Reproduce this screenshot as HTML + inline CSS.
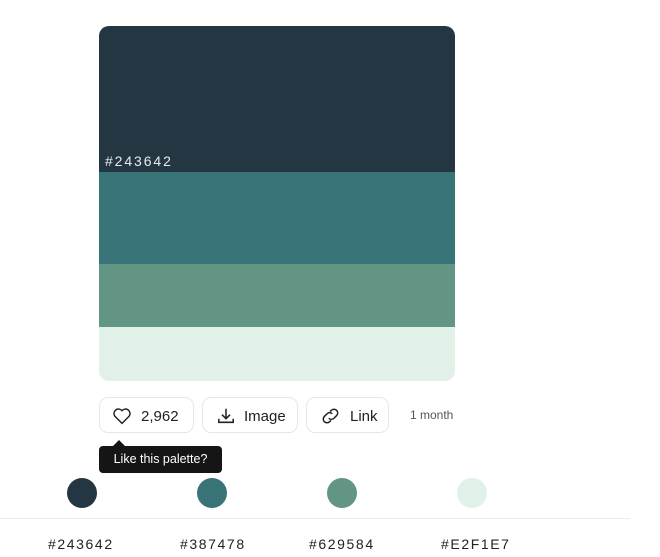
<!DOCTYPE html>
<html><head><style>
body{margin:0;width:660px;height:557px;background:#fff;font-family:"Liberation Sans",sans-serif;position:relative;overflow:hidden}
.pal{position:absolute;left:99px;top:26px;width:356px;height:355px;border-radius:10px;overflow:hidden}
.pal div{position:relative}
.hex{position:absolute;left:6px;bottom:3px;color:#e6ebee;font-size:14px;letter-spacing:1.9px}
.btn{position:absolute;top:397px;height:36px;border:1px solid #e6e6e6;border-radius:9px;display:flex;align-items:center;font-size:15px;color:#222;box-sizing:border-box;padding-left:12px;padding-top:2px}
.btn svg{margin-right:9px}
.tip{position:absolute;left:99px;top:446px;width:123px;height:27px;background:#151515;color:#fff;border-radius:4px;font-size:12.5px;line-height:27px;text-align:center}
.tip:before{content:"";position:absolute;left:14px;top:-6px;border:6px solid transparent;border-top:0;border-bottom-color:#151515}
.c{position:absolute;top:478px;width:30px;height:30px;border-radius:50%}
.l{position:absolute;top:536px;font-size:14px;letter-spacing:1.6px;color:#222}
</style></head><body>
<div class="pal">
<div style="height:146px;background:#243642"><span class="hex">#243642</span></div>
<div style="height:92px;background:#387478"></div>
<div style="height:63px;background:#629584"></div>
<div style="height:54px;background:#E2F1E7"></div>
</div>
<div class="btn" style="left:99px;width:95px"><svg width="20" height="18" viewBox="0 0 24 22"><path d="M12 20 3.5 11.5A5 5 0 0 1 12 4.5a5 5 0 0 1 8.5 7z" fill="none" stroke="#222" stroke-width="1.8"/></svg>2,962</div>
<div class="btn" style="left:202px;width:96px;padding-left:14px"><svg width="18" height="18" viewBox="0 0 20 20"><path d="M10 2v11M5.5 8.5 10 13l4.5-4.5M2 13v4h16v-4" fill="none" stroke="#222" stroke-width="1.7"/></svg>Image</div>
<div class="btn" style="left:306px;width:83px;padding-left:13px"><svg width="21" height="18" viewBox="0 0 24 20"><path d="M10 12.5a4 4 0 0 0 6 0l3-3a4 4 0 0 0-6-6l-1.5 1.5M14 7.5a4 4 0 0 0-6 0l-3 3a4 4 0 0 0 6 6l1.5-1.5" fill="none" stroke="#222" stroke-width="1.7"/></svg>Link</div>
<div style="position:absolute;left:410px;top:408px;font-size:12px;color:#555">1 month</div>
<div class="tip">Like this palette?</div>
<div class="c" style="left:67px;background:#243642"></div>
<div class="c" style="left:197px;background:#387478"></div>
<div class="c" style="left:327px;background:#629584"></div>
<div class="c" style="left:457px;background:#E2F1E7"></div>
<div style="position:absolute;left:0;top:518px;width:630px;height:1px;background:#ececec"></div>
<div class="l" style="left:48px">#243642</div>
<div class="l" style="left:180px">#387478</div>
<div class="l" style="left:309px">#629584</div>
<div class="l" style="left:441px">#E2F1E7</div>
</body></html>
